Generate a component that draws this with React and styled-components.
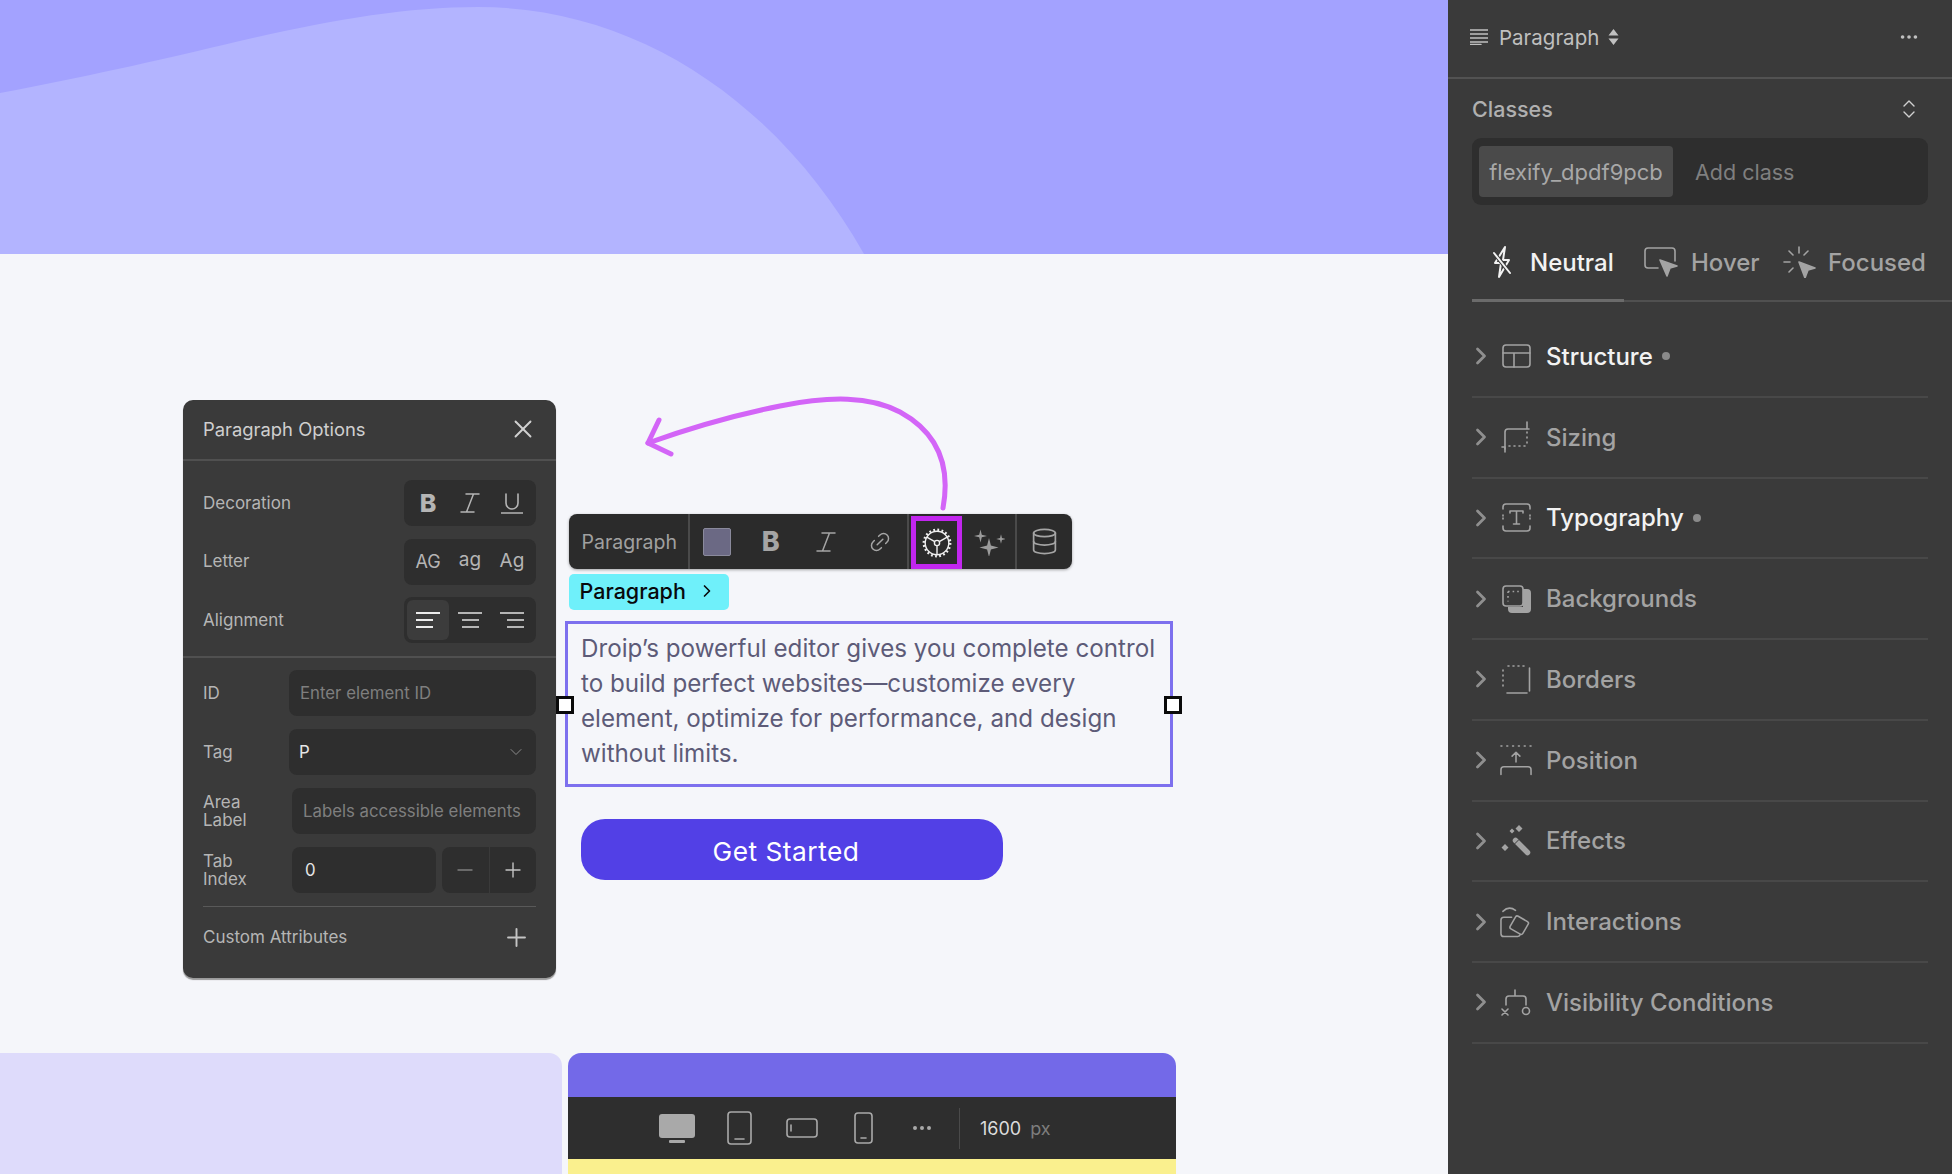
import React from "react";
import styled, { createGlobalStyle } from "styled-components";
import { X, Plus, Minus, ChevronDown, ChevronRight, Link2, Database, ChevronsUpDown, Ellipsis } from "lucide-react";

const GlobalStyle = createGlobalStyle`
  html, body {
    margin: 0;
    padding: 0;
    background: #f5f6fa;
  }
  * {
    box-sizing: border-box;
  }
  body {
    font-family: Inter, "Noto Sans", sans-serif;
  }
`;

// icons that the packages don't have
const Line = ({ w, h, children, ...rest }) => (
  <svg width={w} height={h} viewBox={`0 0 ${w} ${h}`} fill="none" stroke="currentColor" strokeWidth="1.6" strokeLinecap="round" strokeLinejoin="round" {...rest}>
    {children}
  </svg>
);

// four pointed star, k pulls the waist away from the centre
const star = (x, y, r, k = 0.14) => {
  const d = r * k;
  return `M${x} ${y - r}L${x + d} ${y - d}L${x + r} ${y}L${x + d} ${y + d}L${x} ${y + r}L${x - d} ${y + d}L${x - r} ${y}L${x - d} ${y - d}Z`;
};

const ParagraphIcon = () => (
  <Line w={18} h={16} strokeWidth="1.4">
    <path d="M0 1h18M0 5h18M0 9h18M0 13h18M0 15.500h11" />
  </Line>
);
const SortIcon = () => (
  <svg width="11" height="16" viewBox="0 0 11 16" fill="currentColor">
    <path d="M5.500 0 10.500 6.500H.5zM5.500 16 .5 9.500h10z" />
  </svg>
);
const NeutralIcon = () => (
  <Line w={20} h={32} strokeWidth="2">
    <path d="M13 1 3 17h6L7 31l10-17h-6z" />
    <path d="M2 7l16 20" stroke="#3a3a3a" strokeWidth="4" />
    <path d="M2 7l16 20" />
  </Line>
);
const HoverIcon = () => (
  <Line w={35} h={30}>
    <path d="M14 21H4a3 3 0 0 1-3-3V4a3 3 0 0 1 3-3h24a3 3 0 0 1 3 3v10" />
    <path d="M16 13l17 6-7 2-3 8z" fill="currentColor" />
  </Line>
);
const FocusedIcon = () => (
  <Line w={33} h={32}>
    <path d="M16 1v6M6 5l4 4M25 5l-4 4M1 16h6M6 26l4-4" />
    <path d="M16 16l16 6-7 2-3 8z" fill="currentColor" />
  </Line>
);

const rowIcons = {
  structure: (
    <Line w={29} h={24}>
      <rect x="1" y="1" width="27" height="22" rx="3" />
      <path d="M1 9h27M12 9v14" />
    </Line>
  ),
  sizing: (
    <Line w={31} h={32}>
      <path d="M4 28V11a3 3 0 0 1 3-3h21M26 1v6" />
      <path d="M1 26h3M4 26v5" />
      <path d="M26 11v14M8 25h18" strokeDasharray="1 4" />
    </Line>
  ),
  typography: (
    <Line w={29} h={29}>
      <path d="M1 6V4a3 3 0 0 1 3-3h21a3 3 0 0 1 3 3v2M1 23v2a3 3 0 0 0 3 3h21a3 3 0 0 0 3-3v-2" />
      <path d="M1 12v1M1 15v1M28 12v1M28 15v1" />
      <path d="M8 10V8h13v2M14.500 8v13M11.500 21h6" />
    </Line>
  ),
  backgrounds: (
    <svg width="29" height="28" viewBox="0 0 29 28" fill="none" stroke="currentColor" strokeWidth="1.6">
      <path d="M21 4h4a4 4 0 0 1 4 4v16a4 4 0 0 1-4 4H10a4 4 0 0 1-4-4v-2h15z" fill="currentColor" stroke="none" />
      <rect x="1" y="1" width="20" height="20" rx="3" fill="#3a3a3a" />
      <path d="M6 6.500h11M6 6.500v10" strokeDasharray="1.600 3" />
    </svg>
  ),
  borders: (
    <Line w={29} h={29}>
      <path d="M6 1h18" strokeDasharray="1 4" />
      <path d="M1 5v19" strokeDasharray="1 4" />
      <path d="M27.500 3v23M5 28h20" />
    </Line>
  ),
  position: (
    <Line w={33} h={32}>
      <path d="M1 1.500h31" strokeDasharray="1 5" />
      <path d="M16.500 18V8M12.500 12l4-4 4 4M1 31v-5a3 3 0 0 1 3-3h25a3 3 0 0 1 3 3v5" />
    </Line>
  ),
  effects: (
    <svg width="30" height="31" viewBox="0 0 30 31" fill="none">
      <path d="M18 0l3.500 3.500L18 7l-3.500-3.500zM11 3.500l2.500 2.500L11 8.500 8.500 6zM4 19l3.500 3.500L4 26 .5 22.500z" fill="currentColor" />
      <path d="M14.500 15.500 26.500 27.500" stroke="currentColor" strokeWidth="5.500" strokeLinecap="round" />
      <path d="M13 19.500l5-5" stroke="#3a3a3a" strokeWidth="1" />
    </svg>
  ),
  interactions: (
    <Line w={33} h={32}>
      <path d="M3 5c4-4 9-4 13-1" />
      <path d="M12 11H4a3 3 0 0 0-3 3v14a3 3 0 0 0 3 3h14a3 3 0 0 0 3-2" />
      <rect x="12" y="12" width="15" height="15" rx="2" transform="rotate(30 20 20)" />
    </Line>
  ),
  visibility: (
    <Line w={30} h={27}>
      <path d="M14 1v6M5 16v-6a3 3 0 0 1 3-3h14a3 3 0 0 1 3 3v6" />
      <path d="M1 20l6 6M7 20l-6 6" />
      <circle cx="25" cy="22" r="3.500" />
    </Line>
  ),
};

const GearIcon = () => (
  <svg width="30" height="30" viewBox="0 0 30 30" fill="none" stroke="#f0f0f0" strokeWidth="1.400">
    <circle cx="15" cy="15" r="11.800" />
    <circle cx="15" cy="15" r="13.200" strokeWidth="2.400" strokeDasharray="1.800 2.345" />
    <circle cx="15" cy="15" r="2.600" />
    <path d="M15 17.600V26.800M12.750 13.700 4.800 9.100M17.250 13.700l7.950-4.600" />
  </svg>
);
const SparkleIcon = () => (
  <svg width="32" height="28" viewBox="0 0 32 28" fill="#9b9b9b">
    <path d={star(7.500, 8, 6.500, 0.2)} />
    <path d={star(16, 19.500, 9.500, 0.2)} />
    <path d={star(28, 11, 4.800, 0.2)} />
  </svg>
);
const ItalicIcon = ({ size = 20 }) => (
  <svg width={size} height={size} viewBox="0 0 20 20" fill="none" stroke="currentColor" strokeWidth="1.500" strokeLinecap="round">
    <path d="M6 1h13M1 19h13M13.500 1 6.500 19" />
  </svg>
);
const UnderlineIcon = () => (
  <Line w={22} h={21}>
    <path d="M5 1v9a6 6 0 0 0 12 0V1M0 20h22" />
  </Line>
);
const AlignIcon = ({ side }) => {
  const x = { left: [0, 0, 0], center: [0, 4, 4], right: [0, 7, 7] }[side];
  return (
    <svg width="24" height="16" viewBox="0 0 24 16" fill="none" stroke="currentColor" strokeWidth="2">
      <path d={`M${x[0]} 1h24M${x[1]} 8h17M${x[2]} 15h17`} />
    </svg>
  );
};
const DesktopIcon = () => (
  <svg width="36" height="29" viewBox="0 0 36 29" fill="#a9a9a9">
    <rect width="36" height="24" rx="3" />
    <rect x="10" y="26" width="16" height="3" rx="1" />
  </svg>
);
const TabletIcon = () => (
  <Line w={25} h={34}>
    <rect x="1" y="1" width="23" height="32" rx="3" />
    <path d="M8 28h9" />
  </Line>
);
const LandscapeIcon = () => (
  <Line w={32} h={20}>
    <rect x="1" y="1" width="30" height="18" rx="3" />
    <path d="M5 7v6" />
  </Line>
);
const PhoneIcon = () => (
  <Line w={19} h={32}>
    <rect x="1" y="1" width="17" height="30" rx="3" />
    <path d="M7 26h5" />
  </Line>
);

const Page = styled.div`
  position: relative;
  display: flex;
  width: 1952px;
  height: 1174px;
  overflow: hidden;
`;
const Canvas = styled.main`
  width: 1448px;
  display: flex;
  flex-direction: column;
  background: #f5f6fa;
`;
const Hero = styled.div`
  height: 254px;
  background: #a3a2ff;
  svg {
    display: block;
  }
`;
const Stage = styled.div`
  height: 799px;
  display: flex;
  align-items: flex-start;
  padding-left: 183px;
`;

/* options popup */
const Options = styled.section`
  width: 373px;
  height: 578px;
  margin-top: 146px;
  background: #3a3a3a;
  border-radius: 10px;
  color: #b5b5b5;
  font-size: 17px;
  box-shadow: 0 2px 1px #9a9a9a;
`;
const OptionsHead = styled.header`
  height: 61px;
  padding: 0 18px 2px 20px;
  display: flex;
  align-items: center;
  justify-content: space-between;
  border-bottom: 2px solid #505050;
  font-size: 18.400px;
  color: #cfcfcf;
  svg {
    color: #d0d0d0;
  }
`;
const OptionsGroup = styled.div`
  padding: ${(p) => p.$pad};
  display: flex;
  flex-direction: column;
  gap: ${(p) => p.$gap}px;
  border-bottom: ${(p) => (p.$line ? "2px solid #505050" : "none")};
`;
const OptionRow = styled.div`
  display: flex;
  align-items: center;
  justify-content: space-between;
  height: 46px;
`;
const Label = styled.span`
  line-height: 18.500px;
`;
const Segments = styled.div`
  width: 132px;
  height: 46px;
  padding: 3px;
  display: grid;
  grid-template-columns: repeat(3, 1fr);
  background: #2e2e2e;
  border-radius: 8px;
  color: #b5b5b5;
`;
const Segment = styled.span`
  display: flex;
  align-items: center;
  justify-content: center;
  border-radius: 6px;
  font-size: ${(p) => p.$size || 18}px;
  font-weight: ${(p) => p.$weight || 400};
  background: ${(p) => (p.$on ? "#3c3c3c" : "transparent")};
  color: ${(p) => (p.$on ? "#ececec" : "inherit")};
  padding-bottom: ${(p) => p.$lift || 0}px;
`;
const Field = styled.div`
  width: ${(p) => p.$w}px;
  height: 46px;
  padding: 0 ${(p) => p.$pad || 9}px;
  display: flex;
  align-items: center;
  justify-content: space-between;
  background: #2e2e2e;
  border-radius: 8px;
  color: ${(p) => (p.$value ? "#e6e6e6" : "#7f7f7f")};
  font-size: 16.800px;
  white-space: nowrap;
`;
const Stepper = styled.div`
  display: flex;
  width: 94px;
  height: 46px;
  margin-left: 6px;
  border-radius: 8px;
  overflow: hidden;
  gap: 1px;
`;
const Step = styled.span`
  flex: 1;
  display: flex;
  align-items: center;
  justify-content: center;
  background: #2e2e2e;
  color: ${(p) => p.$color};
`;
const Inline = styled.div`
  display: flex;
`;
const AttrRule = styled.div`
  height: 1px;
  margin: 0 20px;
  background: #595959;
`;
const AttrRow = styled.div`
  height: 60px;
  padding: 0 25px 0 20px;
  display: flex;
  align-items: center;
  justify-content: space-between;
  color: #b5b5b5;
`;

/* editor column */
const Editor = styled.div`
  width: 608px;
  margin: 260px 0 0 12.500px;
`;
const Toolbar = styled.div`
  width: 503.500px;
  height: 55px;
  display: flex;
  background: #2b2b2b;
  border-radius: 8px;
  box-shadow: 0 1px 3px rgba(0, 0, 0, 0.35);
  color: #a5a5a5;
`;
const ToolLabel = styled.div`
  width: 122px;
  padding-left: 13px;
  display: flex;
  align-items: center;
  border-right: 2px solid #4a4a4a;
  font-size: 19.500px;
  color: #a0a0a0;
`;
const Tool = styled.div`
  width: ${(p) => p.$w || 55}px;
  display: flex;
  align-items: center;
  justify-content: center;
  font-size: 27px;
  font-weight: 800;
  border-right: ${(p) => (p.$line ? "2px solid #4a4a4a" : "none")};
`;
const GearBox = styled.div`
  width: 51px;
  margin: 2px 0 0 2px;
  display: flex;
  align-items: center;
  justify-content: center;
  border: 5px solid #c226ef;
`;
const Swatch = styled.span`
  width: 28px;
  height: 28px;
  background: #6b6984;
  border: 1px solid #8a8a9c;
  border-radius: 2px;
`;
const Crumb = styled.div`
  width: 160px;
  height: 36px;
  margin-top: 5px;
  padding: 0 12px 2px 11px;
  display: flex;
  align-items: center;
  justify-content: space-between;
  background: #6ff0fa;
  border-radius: 5px;
  color: #08090c;
  font-size: 21.500px;
  font-weight: 450;
`;
const TextBox = styled.div`
  position: relative;
  width: 608px;
  height: 166px;
  margin: 11px 0 0 -3.500px;
  padding: 7px 8px 0 13px;
  border: 3px solid #7d70ee;
  color: #5d5b78;
  font-size: 24.200px;
  line-height: 35px;
`;
const Handle = styled.span`
  position: absolute;
  top: 72px;
  ${(p) => p.$side}: -12px;
  width: 18px;
  height: 18px;
  background: #fff;
  border: 3px solid #0a0a0a;
`;
const CallToAction = styled.button`
  display: block;
  width: 422px;
  height: 61px;
  margin: 32px 0 0 12.500px;
  padding: 3px 12px 0 0;
  border: none;
  border-radius: 24px;
  background: #5240e6;
  color: #fff;
  font-family: inherit;
  font-size: 26.300px;
  letter-spacing: 0.500px;
`;
const Arrow = styled.svg`
  position: absolute;
  left: 630px;
  top: 385px;
`;

/* bottom of the page, the next section peeking in */
const Footer = styled.div`
  height: 121px;
  display: flex;
  gap: 6px;
`;
const Lavender = styled.div`
  width: 562px;
  background: #dedbfb;
  border-top-right-radius: 13px;
`;
const Device = styled.div`
  width: 608px;
  display: flex;
  flex-direction: column;
`;
const DeviceTop = styled.div`
  height: 44px;
  background: #7369e8;
  border-radius: 13px 13px 0 0;
`;
const DeviceBar = styled.div`
  height: 62px;
  padding-left: 91px;
  display: flex;
  align-items: center;
  background: #2e2e2e;
  color: #a9a9a9;
`;
const DeviceSlot = styled.span`
  display: flex;
  margin-right: ${(p) => p.$gap}px;
  svg {
    display: block;
  }
`;
const Width = styled.span`
  margin-left: 25.500px;
  padding: 10px 0 10px 20px;
  border-left: 1px solid #4a4a4a;
  color: #dcdcdc;
  font-size: 18px;
  span {
    margin-left: 9px;
    color: #7d7d7d;
  }
`;
const DeviceBottom = styled.div`
  flex: 1;
  background: #faf08e;
`;

/* right style panel */
const Panel = styled.aside`
  width: 504px;
  background: #3a3a3a;
  color: #a9a9a9;
`;
const PanelHead = styled.div`
  height: 79px;
  padding: 0 32px 3px 22px;
  display: flex;
  align-items: center;
  border-bottom: 2px solid #525252;
  color: #c0c0c0;
  font-size: 20.500px;
`;
const HeadTitle = styled.span`
  margin: 0 9px 0 11px;
`;
const Spacer = styled.span`
  flex: 1;
`;
const ClassTitle = styled.div`
  height: 59px;
  padding: 0 31px 0 24px;
  display: flex;
  align-items: center;
  justify-content: space-between;
  color: #b0b0b0;
  font-size: 21.500px;
  font-weight: 500;
`;
const ClassInput = styled.div`
  height: 67px;
  margin: 0 24px;
  padding: 0 7px;
  display: flex;
  align-items: center;
  gap: 22px;
  background: #2e2e2e;
  border-radius: 9px;
  font-size: 21.500px;
  color: #7f7f7f;
`;
const ClassChip = styled.span`
  width: 194px;
  height: 51px;
  display: flex;
  align-items: center;
  justify-content: center;
  background: #4a4a4a;
  border-radius: 4px;
  font-size: 22px;
  color: #a8a8a8;
`;
const Tabs = styled.div`
  height: 97px;
  margin-left: 24px;
  padding-top: 19px;
  display: flex;
  border-bottom: 2px solid #505050;
`;
const Tab = styled.div`
  width: ${(p) => p.$w}px;
  height: 78px;
  padding: 1px 0 0 ${(p) => p.$pad}px;
  display: flex;
  align-items: center;
  gap: ${(p) => p.$gap}px;
  font-size: 24px;
  font-weight: 500;
  color: ${(p) => (p.$active ? "#f2f2f2" : "#a3a3a3")};
  border-bottom: 3px solid ${(p) => (p.$active ? "#6b6b6b" : "transparent")};
  svg {
    flex: none;
  }
`;
const Sections = styled.ul`
  margin: 15px 24px 0;
  padding: 0;
  list-style: none;
`;
const Section = styled.li`
  height: 80.750px;
  display: flex;
  align-items: center;
  border-bottom: 2px solid #484848;
  color: ${(p) => (p.$set ? "#f2f2f2" : "#a3a3a3")};
  font-size: 24px;
  font-weight: 500;
`;
const Chevron = styled(ChevronRight)`
  flex: none;
  margin-left: -5px;
  color: #8f8f8f;
`;
const IconSlot = styled.span`
  width: 32px;
  margin: 0 14px 0 5px;
  display: flex;
  justify-content: center;
  color: #a3a3a3;
  svg {
    display: block;
  }
`;
const Dot = styled.span`
  width: 8px;
  height: 8px;
  margin-left: 9px;
  border-radius: 50%;
  background: #8a8a8a;
`;

const sections = [
  { key: "structure", name: "Structure", set: true },
  { key: "sizing", name: "Sizing" },
  { key: "typography", name: "Typography", set: true },
  { key: "backgrounds", name: "Backgrounds" },
  { key: "borders", name: "Borders" },
  { key: "position", name: "Position" },
  { key: "effects", name: "Effects" },
  { key: "interactions", name: "Interactions" },
  { key: "visibility", name: "Visibility Conditions" },
];

export default function App() {
  return (
    <Page>
      <GlobalStyle />
      <Canvas>
        <Hero>
          <svg width="1448" height="254" viewBox="0 0 1448 254">
            <path
              d="M0 93C80 78 160 60 223 45C320 22 400 7 478 7C640 7 780 105 864 254H0Z"
              fill="#b3b4ff"
            />
          </svg>
        </Hero>
        <Stage>
          <Options>
            <OptionsHead>
              Paragraph Options
              <X size={30} strokeWidth={1.5} />
            </OptionsHead>
            <OptionsGroup $pad="19px 20px 13px" $gap={12.5} $line>
              <OptionRow>
                <Label>Decoration</Label>
                <Segments>
                  <Segment $size={25} $weight={800}>B</Segment>
                  <Segment><ItalicIcon /></Segment>
                  <Segment><UnderlineIcon /></Segment>
                </Segments>
              </OptionRow>
              <OptionRow>
                <Label>Letter</Label>
                <Segments>
                  <Segment $size={18}>AG</Segment>
                  <Segment $size={19} $lift={5}>ag</Segment>
                  <Segment $size={19} $lift={2}>Ag</Segment>
                </Segments>
              </OptionRow>
              <OptionRow>
                <Label>Alignment</Label>
                <Segments>
                  <Segment $on><AlignIcon side="left" /></Segment>
                  <Segment><AlignIcon side="center" /></Segment>
                  <Segment><AlignIcon side="right" /></Segment>
                </Segments>
              </OptionRow>
            </OptionsGroup>
            <OptionsGroup $pad="12px 20px 13px" $gap={13}>
              <OptionRow>
                <Label>ID</Label>
                <Field $w={247} $pad={11}>Enter element ID</Field>
              </OptionRow>
              <OptionRow>
                <Label>Tag</Label>
                <Field $w={247} $pad={10} $value>
                  P
                  <ChevronDown size={20} strokeWidth={1.2} color="#8a8a8a" />
                </Field>
              </OptionRow>
              <OptionRow>
                <Label>Area<br />Label</Label>
                <Field $w={244} $pad={11}>Labels accessible elements</Field>
              </OptionRow>
              <OptionRow>
                <Label>Tab<br />Index</Label>
                <Inline>
                  <Field $w={144} $pad={13} $value>0</Field>
                  <Stepper>
                    <Step $color="#7f7f7f"><Minus size={24} strokeWidth={1.4} /></Step>
                    <Step $color="#c4c4c4"><Plus size={24} strokeWidth={1.4} /></Step>
                  </Stepper>
                </Inline>
              </OptionRow>
            </OptionsGroup>
            <AttrRule />
            <AttrRow>
              Custom Attributes
              <Plus size={29} strokeWidth={1.6} color="#c4c4c4" />
            </AttrRow>
          </Options>
          <Editor>
            <Toolbar>
              <ToolLabel>Paragraph</ToolLabel>
              <Tool $w={53}><Swatch /></Tool>
              <Tool>B</Tool>
              <Tool><ItalicIcon /></Tool>
              <Tool $w={56} $line><Link2 size={24} strokeWidth={1.5} transform="rotate(-45)" /></Tool>
              <GearBox><GearIcon /></GearBox>
              <Tool $w={55} $line><SparkleIcon /></Tool>
              <Tool><Database size={29} strokeWidth={1.4} /></Tool>
            </Toolbar>
            <Crumb>
              Paragraph
              <ChevronRight size={20} strokeWidth={2} />
            </Crumb>
            <TextBox>
              <Handle $side="left" />
              Droip’s powerful editor gives you complete control to build perfect websites—customize every element, optimize for performance, and design without limits.
              <Handle $side="right" />
            </TextBox>
            <CallToAction>Get Started</CallToAction>
          </Editor>
        </Stage>
        <Footer>
          <Lavender />
          <Device>
            <DeviceTop />
            <DeviceBar>
              <DeviceSlot $gap={32}><DesktopIcon /></DeviceSlot>
              <DeviceSlot $gap={34}><TabletIcon /></DeviceSlot>
              <DeviceSlot $gap={36}><LandscapeIcon /></DeviceSlot>
              <DeviceSlot $gap={36.5}><PhoneIcon /></DeviceSlot>
              <DeviceSlot $gap={0}><Ellipsis size={24} strokeWidth={2} /></DeviceSlot>
              <Width>1600<span>px</span></Width>
            </DeviceBar>
            <DeviceBottom />
          </Device>
        </Footer>
      </Canvas>
      <Panel>
        <PanelHead>
          <ParagraphIcon />
          <HeadTitle>Paragraph</HeadTitle>
          <SortIcon />
          <Spacer />
          <Ellipsis size={22} strokeWidth={2} />
        </PanelHead>
        <ClassTitle>
          Classes
          <ChevronsUpDown size={24} strokeWidth={1.4} color="#d0d0d0" />
        </ClassTitle>
        <ClassInput>
          <ClassChip>flexify_dpdf9pcb</ClassChip>
          Add class
        </ClassInput>
        <Tabs>
          <Tab $w={152} $pad={20} $gap={18} $active><NeutralIcon />Neutral</Tab>
          <Tab $w={139} $pad={20} $gap={12}><HoverIcon />Hover</Tab>
          <Tab $w={165} $pad={20} $gap={12}><FocusedIcon />Focused</Tab>
        </Tabs>
        <Sections>
          {sections.map((s) => (
            <Section key={s.key} $set={s.set}>
              <Chevron size={28} strokeWidth={2.4} />
              <IconSlot>{rowIcons[s.key]}</IconSlot>
              {s.name}
              {s.set && <Dot />}
            </Section>
          ))}
        </Sections>
      </Panel>
      <Arrow width="330" height="130" viewBox="630 385 330 130" fill="none" stroke="#d365f7" strokeWidth="5" strokeLinecap="round" strokeLinejoin="round">
        <path d="M943 508C950 470 942 435 900 412C870 396 830 396 780 406C730 416 690 428 648 443" />
        <path d="M659 420 648 443 671 454" />
      </Arrow>
    </Page>
  );
}
